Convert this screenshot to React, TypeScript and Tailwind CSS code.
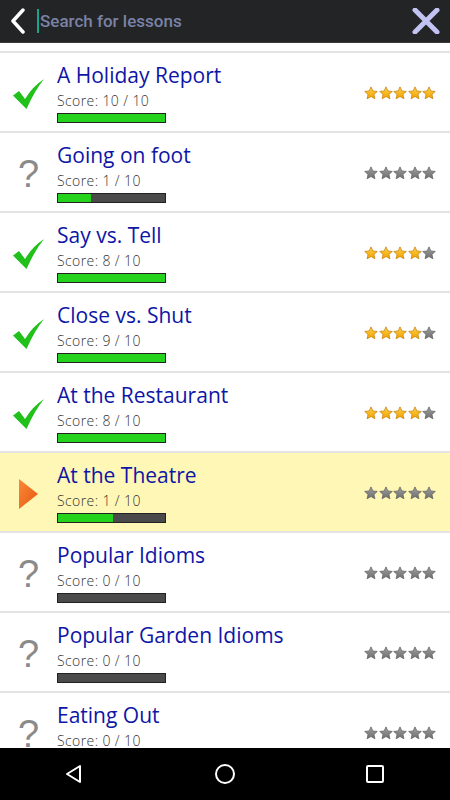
import React from "react";

type Lesson = { title: string; score: number; status: "done" | "unknown" | "current"; stars: number; fill: number };

const lessons: Lesson[] = [
  { title: "A Holiday Report", score: 10, status: "done", stars: 5, fill: 109 },
  { title: "Going on foot", score: 1, status: "unknown", stars: 0, fill: 33 },
  { title: "Say vs. Tell", score: 8, status: "done", stars: 4, fill: 109 },
  { title: "Close vs. Shut", score: 9, status: "done", stars: 4, fill: 109 },
  { title: "At the Restaurant", score: 8, status: "done", stars: 4, fill: 109 },
  { title: "At the Theatre", score: 1, status: "current", stars: 0, fill: 55 },
  { title: "Popular Idioms", score: 0, status: "unknown", stars: 0, fill: 0 },
  { title: "Popular Garden Idioms", score: 0, status: "unknown", stars: 0, fill: 0 },
  { title: "Eating Out", score: 0, status: "unknown", stars: 0, fill: 0 },
];

function Star({ on, id }: { on: boolean; id: string }) {
  return (
    <svg width="14" height="14" viewBox="0 0 24 24">
      <defs>
        <linearGradient id={id} x1="0" y1="0" x2="0" y2="1">
          {on ? (
            <>
              <stop offset="0" stopColor="#ffd34a" />
              <stop offset="1" stopColor="#f3a000" />
            </>
          ) : (
            <>
              <stop offset="0" stopColor="#a0a0a0" />
              <stop offset="1" stopColor="#6e6e6e" />
            </>
          )}
        </linearGradient>
      </defs>
      <path
        d="M12 1.5l3.2 7 7.6.8-5.7 5.1 1.6 7.5L12 18l-6.7 3.9 1.6-7.5L1.2 9.3l7.6-.8z"
        fill={`url(#${id})`}
        stroke={on ? "#c07a00" : "#5a5a5a"}
        strokeWidth="1.2"
        strokeLinejoin="round"
      />
    </svg>
  );
}

function StatusIcon({ status }: { status: Lesson["status"] }) {
  if (status === "done")
    return (
      <svg width="34" height="32" viewBox="0 0 34 32">
        <path d="M1 17.5 L7 13 L13 21 Q20 9 32 1 Q23 12 14.5 31 Z" fill="#1fc11a" />
      </svg>
    );
  if (status === "current")
    return (
      <svg width="22" height="32" viewBox="0 0 22 32">
        <defs>
          <linearGradient id="play" x1="0" y1="0" x2="1" y2="1">
            <stop offset="0" stopColor="#f98a3c" />
            <stop offset="1" stopColor="#e8560c" />
          </linearGradient>
        </defs>
        <path d="M1 1 L20 16 L1 31 Z" fill="url(#play)" />
      </svg>
    );
  return (
    <span className="text-[38px] leading-none text-[#8a8a8a]" style={{ fontFamily: "'Liberation Sans', sans-serif" }}>
      ?
    </span>
  );
}

export default function App() {
  return (
    <div className="w-[450px] h-[800px] flex flex-col bg-white overflow-hidden" style={{ fontFamily: "'Open Sans', sans-serif" }}>
      <div className="h-[43px] bg-[#222426] flex items-center shrink-0 border-b border-[#3a3a3a]">
        <svg width="16" height="26" viewBox="0 0 16 26" className="ml-[10px]">
          <path d="M13 2 L3 13 L13 24" fill="none" stroke="#ffffff" strokeWidth="3.5" strokeLinecap="round" strokeLinejoin="round" />
        </svg>
        <div className="w-[2px] h-[24px] bg-[#1aa58a] ml-[11px]" />
        <span className="text-[17px] font-medium text-[#7a82a6] ml-[1px] mt-[2px]" style={{ fontFamily: "Roboto, sans-serif" }}>
          Search for lessons
        </span>
        <div className="flex-1" />
        <svg width="28" height="26" viewBox="0 0 28 26" className="mr-[10px]">
          <path d="M3 2 L25 24 M25 2 L3 24" stroke="#c3c3f3" strokeWidth="5" strokeLinecap="round" />
        </svg>
      </div>
      <div className="h-[8px] shrink-0" />
      <div className="flex-1 overflow-hidden border-t-2 border-[#e4e4e4]">
        {lessons.map((l, i) => (
          <div
            key={i}
            className={`h-[80px] flex items-center border-b-2 border-[#e4e4e4] ${l.status === "current" ? "bg-[#fff7b5]" : "bg-white"}`}
          >
            <div className="w-[57px] h-full flex items-center justify-center pt-[3px]">
              <StatusIcon status={l.status} />
            </div>
            <div className="flex-1 flex flex-col h-full pt-[8px]">
              <div className="text-[21px] leading-[28px] text-[#0e16a6]">{l.title}</div>
              <div className="text-[14px] leading-[20px] text-[#333] font-light mt-[2px] tracking-[0.4px]">Score: {l.score} / 10</div>
              <div className="w-[109px] h-[10px] bg-[#4a4a4a] border border-[#222] mt-[2px] flex">
                <div className="h-full bg-[#26d31c]" style={{ width: l.fill }} />
              </div>
            </div>
            <div className="flex items-center gap-[0.5px] mr-[14px] mt-[2px]">
              {[0, 1, 2, 3, 4].map((s) => (
                <Star key={s} on={s < l.stars} id={`s${i}-${s}`} />
              ))}
            </div>
          </div>
        ))}
      </div>
      <div className="h-[52px] bg-black shrink-0 flex items-center">
        <div className="flex-1 flex justify-center">
          <svg width="22" height="22" viewBox="0 0 22 22" className="ml-[-2px]">
            <path d="M17 3 L17 19 L4 11 Z" fill="none" stroke="#fff" strokeWidth="2" strokeLinejoin="round" />
          </svg>
        </div>
        <div className="flex-1 flex justify-center">
          <svg width="22" height="22" viewBox="0 0 22 22">
            <circle cx="11" cy="11" r="9" fill="none" stroke="#fff" strokeWidth="2" />
          </svg>
        </div>
        <div className="flex-1 flex justify-center">
          <svg width="22" height="22" viewBox="0 0 22 22">
            <rect x="3" y="3" width="16" height="16" fill="none" stroke="#fff" strokeWidth="2" rx="1" />
          </svg>
        </div>
      </div>
    </div>
  );
}
